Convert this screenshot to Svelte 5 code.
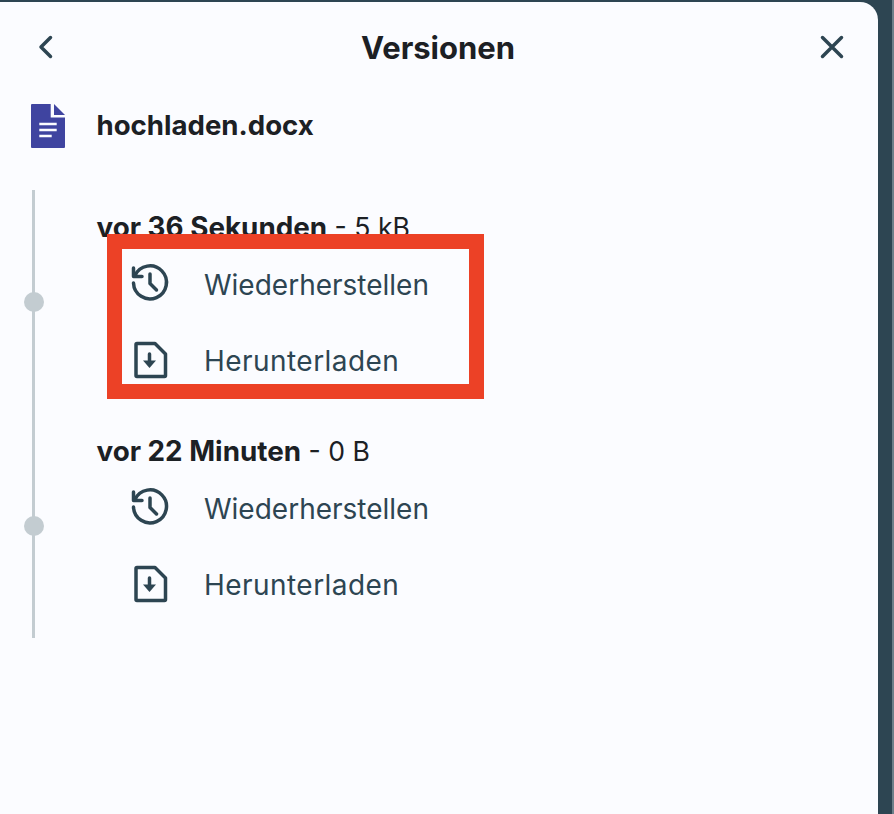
<script>
  const versions = [
    { age: 'vor 36 Sekunden', size: '5 kB' },
    { age: 'vor 22 Minuten', size: '0 B' }
  ];
</script>

<div class="screen">
  <div class="panel">
    <header class="head">
      <button class="icon-btn" aria-label="Zurück">
        <svg width="24" height="28" viewBox="0 0 24 28"><path d="M16.500 4.500 7 14l9.500 9.500" /></svg>
      </button>
      <h1>Versionen</h1>
      <button class="icon-btn" aria-label="Schließen">
        <svg width="28" height="28" viewBox="0 0 28 28"><path d="M4.500 4.500l19 19M23.500 4.500l-19 19" /></svg>
      </button>
    </header>

    <div class="file">
      <svg class="doc" width="34" height="44" viewBox="0 0 34 44">
        <path class="doc-body" d="M1 0h18.700v13.500H34V43a1 1 0 0 1-1 1H1a1 1 0 0 1-1-1V1a1 1 0 0 1 1-1z" />
        <path class="doc-body" d="M23 0l11 11H23z" />
        <path class="doc-lines" d="M8.300 20h17.400M8.300 26h17.400M8.300 32h12.400" />
      </svg>
      <span class="name">hochladen.docx</span>
    </div>

    <div class="timeline">
      {#each versions as v}
        <section class="version">
          <span class="dot"></span>
          <div class="title"><b>{v.age}</b> - {v.size}</div>
          <div class="action">
            <svg width="38" height="38" viewBox="0 0 38 38">
              <path d="M4 11.500A16.500 16.500 0 1 1 2.500 19" />
              <path d="M2.500 4v8.500H11" />
              <path d="M19 10v9.500l6.500 6.500" />
            </svg>
            <span>Wiederherstellen</span>
          </div>
          <div class="action">
            <svg width="38" height="38" viewBox="0 0 38 38">
              <path d="M24 3.500H6a1 1 0 0 0-1 1v31a1 1 0 0 0 1 1h27.500a1 1 0 0 0 1-1V14z" />
              <path d="M18.500 14v8" />
              <path class="solid" d="M12 20.500h13l-6.500 7.500z" />
            </svg>
            <span class="wide">Herunterladen</span>
          </div>
        </section>
      {/each}
    </div>

    <div class="highlight"></div>
  </div>
</div>

<style>
  :global(body) {
    margin: 0;
    background: #2d4552;
  }

  .screen {
    width: 894px;
    height: 814px;
    box-sizing: border-box;
    padding: 2px 16px 0 0;
    background: linear-gradient(to right, #2d4552 892px, #6d7f89 892px);
    overflow: hidden;
    font-family: Inter, Lato, sans-serif;
  }

  .panel {
    position: relative;
    height: 812px;
    background: #fbfcff;
    border-top-right-radius: 18px;
    color: #1c2024;
  }

  .head {
    display: flex;
    align-items: center;
    justify-content: space-between;
    height: 90px;
    padding: 0 32px 0 34px;
  }

  h1 {
    margin: 0;
    font-size: 31px;
    font-weight: 700;
  }

  .icon-btn {
    display: flex;
    padding: 0;
    border: 0;
    background: none;
  }

  .icon-btn svg,
  .action svg {
    fill: none;
    stroke: #2d4552;
    stroke-width: 3.500;
    stroke-linecap: round;
    stroke-linejoin: round;
    overflow: visible;
  }

  .action svg .solid {
    fill: #2d4552;
    stroke: none;
  }

  .file {
    display: flex;
    align-items: center;
    gap: 31.500px;
    height: 66px;
    padding-left: 31px;
  }

  .doc {
    flex: none;
    margin-top: 2px;
  }
  .doc-body { fill: #3f44a0; }
  .doc-lines {
    stroke: #fbfcff;
    stroke-width: 2.700;
    fill: none;
  }

  .name {
    font-size: 27.600px;
    font-weight: 700;
  }

  .timeline {
    margin: 32px 0 0 32px;
    width: 400px;
    height: 448px;
    box-sizing: border-box;
    padding-top: 17px;
    border-left: 3px solid #c3ccd1;
  }

  .version {
    position: relative;
    padding-left: 61.500px;
    margin-bottom: 32px;
  }

  .dot {
    position: absolute;
    left: -11px;
    top: 85px;
    width: 20px;
    height: 20px;
    border-radius: 50%;
    background: #c3ccd1;
  }

  .title {
    height: 40px;
    line-height: 40px;
    font-size: 26.600px;
    white-space: nowrap;
  }

  .title b {
    font-size: 27.800px;
  }

  .action {
    display: flex;
    align-items: center;
    gap: 35px;
    height: 76px;
    padding-left: 34.500px;
    font-size: 28px;
    color: #2d4552;
  }

  .action span {
    margin-bottom: 1px;
  }

  .action .wide {
    letter-spacing: 0.450px;
  }

  .action svg {
    flex: none;
    margin-bottom: 4px;
  }

  .highlight {
    position: absolute;
    left: 107px;
    top: 232px;
    width: 377px;
    height: 165px;
    box-sizing: border-box;
    border: 15px solid #ec4126;
  }
</style>
